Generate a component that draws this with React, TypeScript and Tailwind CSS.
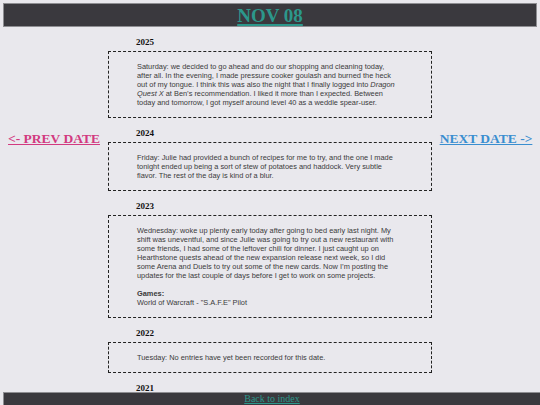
import React from 'react';

type Entry = {
  year: string;
  body: React.ReactNode;
};

const entries: Entry[] = [
  {
    year: '2025',
    body: (
      <p>
        Saturday: we decided to go ahead and do our shopping and cleaning today, after all. In the evening, I made
        pressure cooker goulash and burned the heck out of my tongue. I think this was also the night that I finally
        logged into <i>Dragon Quest X</i> at Ben&rsquo;s recommendation. I liked it more than I expected. Between today
        and tomorrow, I got myself around level 40 as a weddle spear-user.
      </p>
    ),
  },
  {
    year: '2024',
    body: (
      <p>
        Friday: Julie had provided a bunch of recipes for me to try, and the one I made tonight ended up being a sort of
        stew of potatoes and haddock. Very subtle flavor. The rest of the day is kind of a blur.
      </p>
    ),
  },
  {
    year: '2023',
    body: (
      <>
        <p>
          Wednesday: woke up plenty early today after going to bed early last night. My shift was uneventful, and since
          Julie was going to try out a new restaurant with some friends, I had some of the leftover chili for dinner. I
          just caught up on Hearthstone quests ahead of the new expansion release next week, so I did some Arena and
          Duels to try out some of the new cards. Now I&rsquo;m posting the updates for the last couple of days before I
          get to work on some projects.
        </p>
        <p className="mt-[9px]">
          <b>Games:</b>
          <br />
          World of Warcraft - &quot;S.A.F.E&quot; Pilot
        </p>
      </>
    ),
  },
  {
    year: '2022',
    body: <p>Tuesday: No entries have yet been recorded for this date.</p>,
  },
  {
    year: '2021',
    body: <p>Monday: No entries have yet been recorded for this date.</p>,
  },
];

const serif = "font-['Liberation_Serif',serif]";

export default function App() {
  return (
    <div className="relative h-[405px] w-[540px] overflow-hidden bg-[#e9e8ed] font-['Liberation_Sans',sans-serif]">
      <header className="mx-[3px] mt-[3px] flex h-[24px] items-center justify-center border border-[#8e8e92] bg-[#3a393e]">
        <a href="#" className={`${serif} text-[19px] font-bold leading-none text-[#2c978b] underline decoration-[1.5px] underline-offset-2`}>
          NOV 08
        </a>
      </header>

      <div className="flex">
        <aside className="flex w-[108px] justify-center pt-[104px]">
          <a href="#" className={`${serif} text-[13.5px] font-bold leading-[16px] text-[#d23a80] underline`}>
            &lt;- PREV DATE
          </a>
        </aside>

        <main className="w-[324px]">
          {entries.map(entry => (
            <section key={entry.year} className="mt-[10px]">
              <h3 className={`${serif} pl-[28px] text-[9px] font-bold leading-[11px] text-[#111]`}>{entry.year}</h3>
              <div className="mt-[3px] border border-dashed border-[#222] py-[10px] pl-[28px] pr-[33px] text-[7.4px] leading-[9px] text-[#3a3a3a]">
                {entry.body}
              </div>
            </section>
          ))}
        </main>

        <aside className="flex flex-1 justify-center pt-[104px]">
          <a href="#" className={`${serif} text-[13.5px] font-bold leading-[16px] text-[#3a8ed0] underline`}>
            NEXT DATE -&gt;
          </a>
        </aside>
      </div>

      <footer className="absolute bottom-0 left-[3px] right-0 flex h-[13px] items-start justify-center border-l border-t border-[#8e8e92] bg-[#3a393e]">
        <a href="#" className={`${serif} text-[10px] leading-[11px] text-[#2c978b] underline`}>
          Back to index
        </a>
      </footer>
    </div>
  );
}
